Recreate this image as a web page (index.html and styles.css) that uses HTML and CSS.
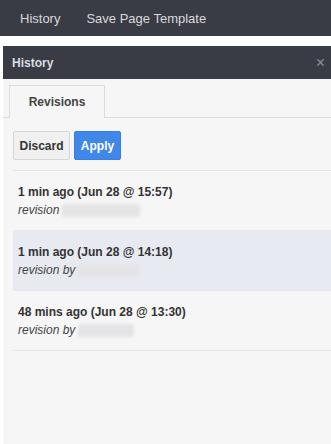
FILE: index.html
```html
<!DOCTYPE html>
<html lang="en">
<head>
    <meta charset="UTF-8">
    <title>History</title>
    <link rel="stylesheet" href="styles.css">
</head>
<body>

    <div class="topbar">
        <span class="topbar-item">History</span>
        <span class="topbar-item">Save Page Template</span>
    </div>

    <div class="panel">
        <div class="panel-header">
            <span class="panel-title">History</span>
            <span class="panel-close">&times;</span>
        </div>

        <div class="tabs">
            <div class="tab tab-active">Revisions</div>
        </div>

        <div class="toolbar">
            <button class="btn btn-discard">Discard</button>
            <button class="btn btn-apply">Apply</button>
        </div>

        <div class="revision-list">
            <div class="revision">
                <div class="revision-time">1 min ago (Jun 28 @ 15:57)</div>
                <div class="revision-author">revision <span class="blur-name blur-long"></span></div>
            </div>
            <div class="revision revision-current">
                <div class="revision-time">1 min ago (Jun 28 @ 14:18)</div>
                <div class="revision-author">revision by <span class="blur-name"></span></div>
            </div>
            <div class="revision">
                <div class="revision-time">48 mins ago (Jun 28 @ 13:30)</div>
                <div class="revision-author">revision by <span class="blur-name blur-short"></span></div>
            </div>
        </div>
    </div>

</body>
</html>
```

FILE: styles.css
```css
body {
    margin: 0;
    font-family: "Liberation Sans", Arial, sans-serif;
    background-color: #fff;
}

/* Top menu bar */
.topbar {
    height: 36px;
    background-color: #3a3c45;
    display: flex;
    align-items: center;
    gap: 26px;
    padding-left: 20px;
}

.topbar-item {
    color: #d8d9dc;
    font-size: 13px;
}

/* History panel */
.panel {
    margin: 10px 0 0 3px;
    height: 398px;
    background-color: #f6f6f6;
}

.panel-header {
    height: 33px;
    background-color: #3a3c45;
    display: flex;
    align-items: center;
    justify-content: space-between;
    padding: 0 6px 0 9px;
}

.panel-title {
    color: #dcdde0;
    font-size: 12px;
    font-weight: bold;
}

.panel-close {
    color: #8d8f96;
    font-size: 16px;
}

.tabs {
    padding: 6px 0 0 6px;
    border-bottom: 1px solid #dcdcdc;
    display: flex;
}

.tab {
    width: 96px;
    height: 33px;
    box-sizing: border-box;
    border: 1px solid #dcdcdc;
    border-bottom: none;
    margin-bottom: -1px;
    background-color: #f6f6f6;
    display: flex;
    align-items: center;
    justify-content: center;
    font-size: 12px;
    font-weight: bold;
    color: #444;
}

.toolbar {
    display: flex;
    gap: 4px;
    padding: 13px 0 10px;
    border-bottom: 1px solid #e6e6ea;
    margin-left: 10px;
}

.btn {
    height: 29px;
    border-radius: 2px;
    font-family: inherit;
    font-size: 12px;
    font-weight: bold;
    padding: 0;
    cursor: pointer;
}

.btn-discard {
    width: 57px;
    background-color: #f0f0f0;
    border: 1px solid #d6d6d6;
    color: #333;
}

.btn-apply {
    width: 47px;
    background-color: #3f87e8;
    border: 1px solid #3a7fdc;
    color: #fff;
}

/* Revision entries */
.revision-list {
    margin-left: 10px;
}

.revision {
    padding: 12px 5px 11px;
    border-bottom: 1px solid #e6e8ef;
}

.revision-current {
    background-color: #e7eaf0;
}

.revision-time {
    font-size: 12px;
    font-weight: bold;
    color: #333;
    line-height: 18px;
}

.revision-author {
    font-size: 12px;
    font-style: italic;
    color: #444;
    line-height: 18px;
    display: flex;
    align-items: center;
    gap: 3px;
}

.blur-name {
    display: inline-block;
    width: 61px;
    height: 13px;
    background-color: #e4e4e6;
    border-radius: 3px;
    filter: blur(1.5px);
}

.blur-long {
    width: 78px;
}

.blur-short {
    width: 56px;
}
```
